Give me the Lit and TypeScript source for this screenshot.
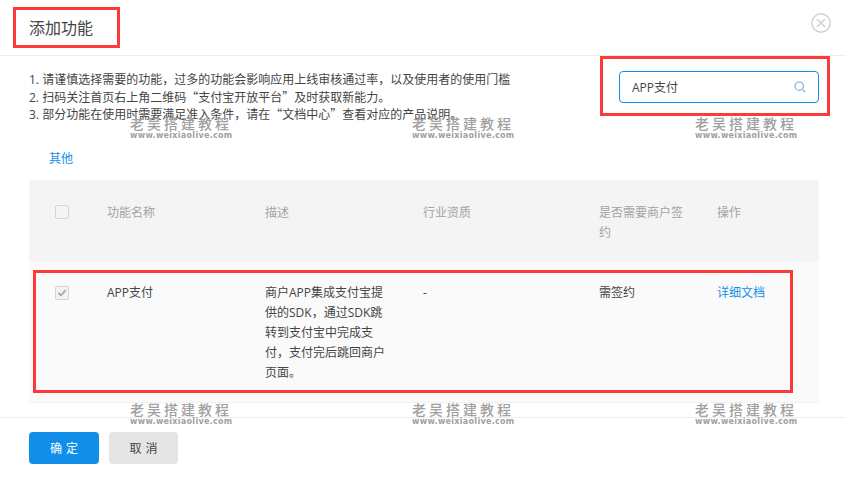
import { LitElement, html, css } from "lit";
import { customElement } from "lit/decorators.js";

@customElement("app-root")
export class AppRoot extends LitElement {
  static styles = css`
    :host {
      display: block;
      width: 846px;
      height: 478px;
      position: relative;
      overflow: hidden;
      background: #fff;
      font-family: "Open Sans", "Noto Sans CJK SC", sans-serif;
      font-size: 12px;
      color: #333;
    }
    .header {
      height: 56px;
      box-sizing: border-box;
      border-bottom: 1px solid #eeeeee;
      display: flex;
      align-items: center;
      justify-content: space-between;
      padding: 0 15px 0 29px;
    }
    .title { font-size: 16px; color: #444; line-height: 20px; }
    .close { display: block; margin-top: -10px; }
    .top {
      height: 124px;
      box-sizing: border-box;
      padding: 15px 27px 0 29px;
      display: grid;
      grid-template-columns: 1fr 200px;
      position: relative;
    }
    .notes { margin: 1px 0 0; line-height: 16.5px; font-size: 12px; color: #444; }
    .q { font-family: "Noto Sans CJK SC", sans-serif; }
    .tab { color: #108ee9; line-height: 20px; margin: 25px 0 0 20px; }
    .search {
      height: 32px;
      box-sizing: border-box;
      border: 1px solid #108ee9;
      border-radius: 4px;
      display: flex;
      align-items: center;
      justify-content: space-between;
      padding: 0 12px;
      color: #444;
    }
    .table { margin: 0 27px 0 29px; }
    .row {
      display: grid;
      grid-template-columns: 78px 158px 158px 176px 118px 102px;
      line-height: 20px;
    }
    .head { background: #f4f4f4; color: #a3a3a3; height: 82px; padding-top: 23px; box-sizing: border-box; }
    .body { background: #fafafa; height: 141px; padding-top: 21px; box-sizing: border-box; border-bottom: 1px solid #f0f0f0; color: #444; }
    .check { padding-left: 26px; }
    .box {
      width: 14px;
      height: 14px;
      box-sizing: border-box;
      border: 1px solid #d4d4d4;
      border-radius: 2px;
      display: flex;
      align-items: center;
      justify-content: center;
      margin-top: 2px;
    }
    .boxed { background: #f3f3f3; margin-top: 3px; }
    .desc { width: 125px; }
    .sign { width: 90px; }
    .link { color: #108ee9; }
    .footer {
      margin-top: 14px;
      border-top: 1px solid #eeeeee;
      padding: 14px 29px 0;
      display: flex;
      gap: 10px;
    }
    .btn {
      height: 32px;
      border: none;
      border-radius: 4px;
      font: inherit;
      padding: 0;
      word-spacing: 1px;
    }
    .primary { width: 70px; background: #108ee9; color: #fff; }
    .ghost { width: 69px; background: #e5e5e5; color: #444; }
    .mark {
      position: absolute;
      width: 104px;
      text-align: left;
      color: #a0a0a0;
      pointer-events: none;
    }
    .mark .cn { font-size: 14px; letter-spacing: 3px; line-height: 16px; font-weight: 500; }
    .mark .en { font-family: "DejaVu Sans", sans-serif; font-size: 8px; font-weight: 700; letter-spacing: 0.3px; line-height: 8px; white-space: nowrap; }
    .red { position: absolute; box-sizing: border-box; border: 3px solid #fb3a3a; pointer-events: none; }
  `;

  private mark(x: number, y: number) {
    return html`<div class="mark" style="left:${x}px;top:${y}px">
      <div class="cn">老吴搭建教程</div>
      <div class="en">www.weixiaolive.com</div>
    </div>`;
  }

  private red(x: number, y: number, w: number, h: number) {
    return html`<div class="red" style="left:${x}px;top:${y}px;width:${w}px;height:${h}px"></div>`;
  }

  render() {
    return html`
      <div class="header">
        <div class="title">添加功能</div>
        <svg class="close" width="20" height="20" viewBox="0 0 20 20" fill="none" stroke="#d0d0d0">
          <circle cx="10" cy="10" r="9.2" stroke-width="1.4"></circle>
          <path d="M6 6l8 8M14 6l-8 8" stroke-width="1.5"></path>
        </svg>
      </div>
      <div class="top">
        <div>
          <p class="notes">
            1. 请谨慎选择需要的功能，过多的功能会影响应用上线审核通过率，以及使用者的使用门槛<br />
            2. 扫码关注首页右上角二维码<span class="q">“</span>支付宝开放平台<span class="q">”</span>及时获取新能力。<br />
            3. 部分功能在使用时需要满足准入条件，请在<span class="q">“</span>文档中心<span class="q">”</span>查看对应的产品说明。
          </p>
          <div class="tab">其他</div>
        </div>
        <div class="search">
          <span>APP支付</span>
          <svg width="12" height="12" viewBox="0 0 12 12" fill="none" stroke="#6fa8e6" stroke-width="1.1">
            <circle cx="5.2" cy="5.2" r="4.2"></circle>
            <path d="M8.3 8.3l2.9 2.9"></path>
          </svg>
        </div>
      </div>
      <div class="table">
        <div class="row head">
          <div class="check"><div class="box"></div></div>
          <div>功能名称</div>
          <div>描述</div>
          <div>行业资质</div>
          <div class="sign">是否需要商户签约</div>
          <div>操作</div>
        </div>
        <div class="row body">
          <div class="check">
            <div class="box boxed">
              <svg width="10" height="10" viewBox="0 0 10 10" fill="none" stroke="#a8a8a8" stroke-width="1.8">
                <path d="M1.5 5l2.5 2.5L8.5 2.2"></path>
              </svg>
            </div>
          </div>
          <div>APP支付</div>
          <div class="desc">商户APP集成支付宝提供的SDK，通过SDK跳转到支付宝中完成支付，支付完后跳回商户页面。</div>
          <div>-</div>
          <div>需签约</div>
          <div class="link">详细文档</div>
        </div>
      </div>
      <div class="footer">
        <button class="btn primary">确 定</button>
        <button class="btn ghost">取 消</button>
      </div>
      ${this.mark(130, 116)}${this.mark(412, 116)}${this.mark(695, 116)}
      ${this.mark(130, 402)}${this.mark(412, 402)}${this.mark(695, 402)}
      ${this.red(13, 7, 107, 41)}${this.red(600, 56, 230, 60)}${this.red(33, 270, 760, 123)}
    `;
  }
}
